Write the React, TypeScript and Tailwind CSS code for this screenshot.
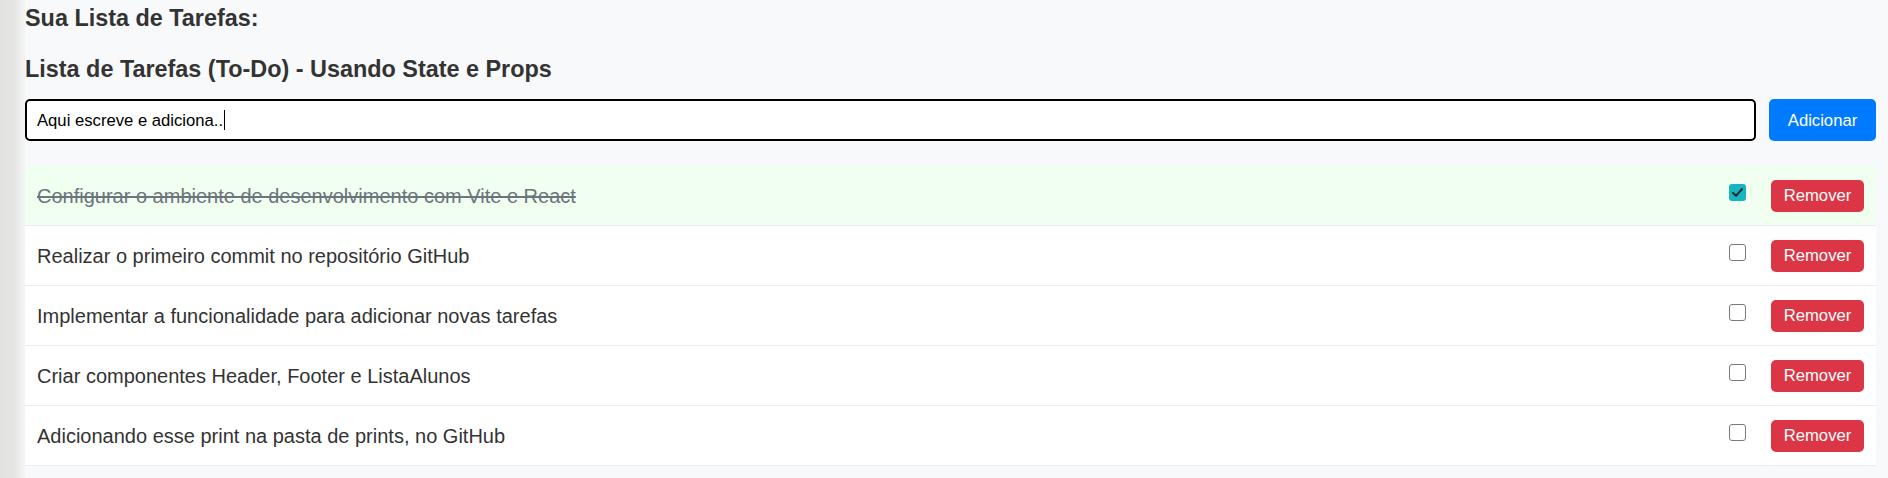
import React from "react";

const tasks = [
  { text: "Configurar o ambiente de desenvolvimento com Vite e React", done: true },
  { text: "Realizar o primeiro commit no repositório GitHub", done: false },
  { text: "Implementar a funcionalidade para adicionar novas tarefas", done: false },
  { text: "Criar componentes Header, Footer e ListaAlunos", done: false },
  { text: "Adicionando esse print na pasta de prints, no GitHub", done: false },
];

function Checkbox({ checked }: { checked: boolean }) {
  if (checked) {
    return (
      <span className="mb-[6px] flex h-[17px] w-[17px] items-center justify-center rounded-[3px] bg-[#18b4c2]">
        <svg width="13" height="13" viewBox="0 0 16 16">
          <path d="M2.5 8.5 L6.2 12 L13.5 3.8" fill="none" stroke="#2b2b2b" strokeWidth="2.6" strokeLinecap="round" strokeLinejoin="round" />
        </svg>
      </span>
    );
  }
  return <span className="mb-[6px] block h-[17px] w-[17px] rounded-[3px] border-[1.5px] border-[#7a7a7a] bg-white" />;
}

export default function App() {
  return (
    <div
      className="flex min-h-[478px] w-full bg-[#f8f9fa] text-[#333]"
      style={{ fontFamily: '"Liberation Sans", Arial, sans-serif' }}
    >
      <div className="w-[25px] shrink-0 bg-[linear-gradient(to_right,#e2e2e0_0%,#e5e5e3_55%,#f4f5f5_100%)]" />
      <div className="flex flex-1 flex-col pr-[12px] pt-[5px]">
        <h3 className="text-[23.4px] font-bold leading-[27px] text-[#333]">Sua Lista de Tarefas:</h3>
        <h3 className="mt-[24px] text-[23.4px] font-bold leading-[27px] text-[#333]">
          Lista de Tarefas (To-Do) - Usando State e Props
        </h3>
        <div className="mt-[16px] flex gap-[13px]">
          <div className="flex h-[42px] flex-1 items-center rounded-[5px] border-2 border-black bg-white pl-[10px] text-[16.67px] text-black">
            <span>Aqui escreve e adiciona..</span>
            <span className="ml-[1px] inline-block h-[20px] w-[1px] bg-black" />
          </div>
          <button className="h-[42px] w-[107px] rounded-[5px] bg-[#007bff] text-[16.67px] text-white">Adicionar</button>
        </div>
        <ul className="mt-[25px] flex flex-col">
          {tasks.map((t, i) => (
            <li
              key={i}
              className={`flex h-[60px] items-center border-b border-[#e9ecef] pl-[12px] pr-[12px] ${
                t.done ? "bg-[#f0fff0]" : "bg-white"
              }`}
            >
              <span
                className={`flex-1 text-[20px] ${t.done ? "text-[#6c757d] line-through" : "text-[#333]"}`}
              >
                {t.text}
              </span>
              <Checkbox checked={t.done} />
              <button className="ml-[25px] h-[32px] w-[93px] rounded-[5px] bg-[#dc3545] text-[16.67px] text-white">
                Remover
              </button>
            </li>
          ))}
        </ul>
      </div>
    </div>
  );
}
